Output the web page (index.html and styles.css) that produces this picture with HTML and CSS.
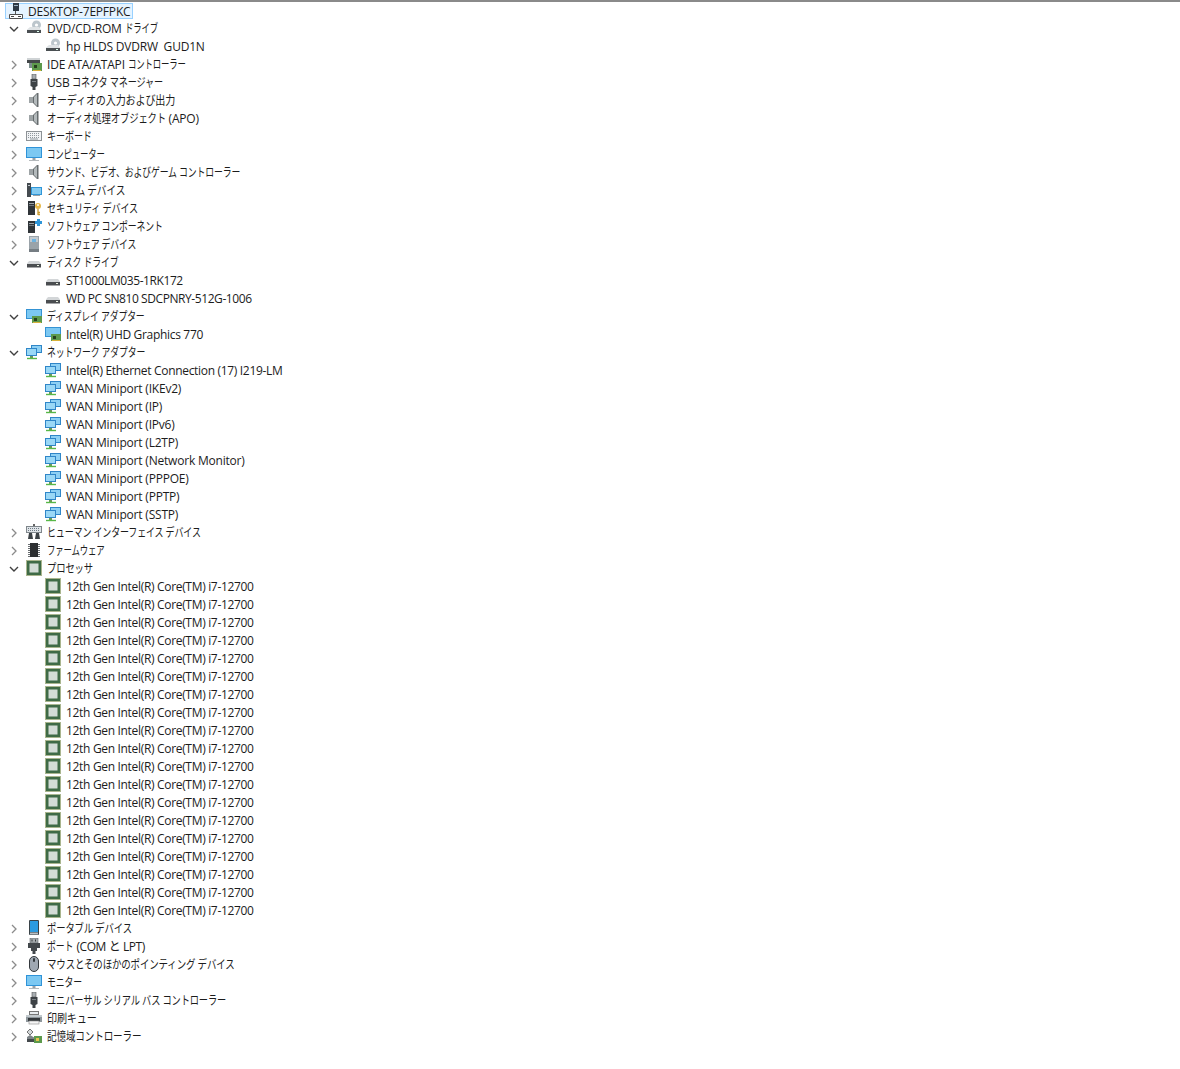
FILE: index.html
```html
<!DOCTYPE html>
<html lang="ja">
<head>
    <meta charset="UTF-8">
    <title>デバイス マネージャー</title>
    <link rel="stylesheet" href="styles.css">
</head>
<body>
<svg class="defs" width="0" height="0">
    <defs>
        <symbol id="open" viewBox="0 0 10 10"><path d="M1 3l4 4 4-4" fill="none" stroke="#404040" stroke-width="1.4"/></symbol>
        <symbol id="closed" viewBox="0 0 10 10"><path d="M3 1l4 4-4 4" fill="none" stroke="#8c8c8c" stroke-width="1.3"/></symbol>
        <symbol id="pc" viewBox="0 0 16 16"><rect x="5" y="0" width="6" height="8" fill="#2f3a45"/><rect x="6" y="2" width="4" height="1" fill="#9fb4c4"/><path d="M7.5 8v3" stroke="#555"/><path d="M1.5 11.5h13v4h-13z" fill="#fff" stroke="#505050"/><rect x="3" y="13" width="3" height="1" fill="#444"/><rect x="10" y="13" width="3" height="1" fill="#444"/></symbol>
        <symbol id="optical" viewBox="0 0 16 16"><circle cx="10.5" cy="5" r="4.5" fill="#bcc6cc"/><circle cx="10.5" cy="5" r="1.6" fill="#fff"/><path d="M1 9.5L4 7h9l2 2.5V13H1z" fill="#dfe3e5"/><rect x="1" y="10" width="14" height="3" fill="#4a4f52"/><rect x="11" y="11" width="2" height="1" fill="#dfe"/></symbol>
        <symbol id="disk" viewBox="0 0 16 16"><path d="M1 9.5L3 7h10l2 2.5V13H1z" fill="#d3d6d8"/><rect x="1" y="10" width="14" height="3.5" fill="#4a4d50"/><rect x="11" y="11" width="2" height="1" fill="#e8f0e0"/></symbol>
        <symbol id="ide" viewBox="0 0 16 16"><path d="M1 2h13v4H1z" fill="#cfd3d5"/><rect x="1" y="4" width="13" height="3" fill="#44484a"/><rect x="6" y="7" width="10" height="8" fill="#5d9a4c"/><rect x="8" y="9" width="3" height="3" fill="#27401f"/><path d="M7 14.5h8" stroke="#d8b13a"/><rect x="3" y="7" width="3" height="5" fill="#7b8d8c"/></symbol>
        <symbol id="usb" viewBox="0 0 16 16"><rect x="6" y="0" width="4" height="5" fill="#a9aeb2" stroke="#555" stroke-width=".6"/><path d="M4.5 5h7v7l-2 1v3h-3v-3l-2-1z" fill="#3d4246"/><rect x="6" y="7" width="4" height="1" fill="#7b8186"/></symbol>
        <symbol id="speaker" viewBox="0 0 16 16"><rect x="3" y="5" width="4" height="6" fill="#9ea4a6"/><path d="M7 5l4-4h1.5v14H11l-4-4z" fill="#666c6e"/><path d="M8 5l3-3v12l-3-3z" fill="#b4babc"/></symbol>
        <symbol id="keyboard" viewBox="0 0 16 16"><rect x=".5" y="3.5" width="15" height="9" fill="#f1f3f5" stroke="#8d9296"/><path d="M2 5.5h12M2 7.5h12M2 9.5h12" stroke="#8f979d" stroke-dasharray="1 1"/><path d="M4 11h8" stroke="#8f979d"/></symbol>
        <symbol id="monitor" viewBox="0 0 16 16"><rect x="0" y="1" width="16" height="11" fill="#2f93d8"/><rect x="1" y="2" width="14" height="9" fill="#7cc8f2"/><rect x="6.5" y="12" width="3" height="2" fill="#9aa0a4"/><rect x="3" y="14" width="10" height="1" fill="#b4b9bc"/></symbol>
        <symbol id="system" viewBox="0 0 16 16"><rect x="1" y="1" width="4" height="14" fill="#454b50"/><rect x="2" y="3" width="2" height="1" fill="#c2c8cc"/><rect x="5" y="5" width="11" height="8" fill="#2f96d8"/><rect x="6" y="6" width="9" height="6" fill="#86ccf2"/><rect x="7" y="13" width="7" height="1" fill="#9aa0a4"/></symbol>
        <symbol id="security" viewBox="0 0 16 16"><rect x="2" y="1" width="7" height="14" fill="#2f3438"/><rect x="3" y="3" width="5" height="1" fill="#9ca3a8"/><rect x="3" y="5" width="5" height="1" fill="#6e767c"/><circle cx="12" cy="6" r="3" fill="#e6b84a"/><circle cx="12" cy="5" r="1" fill="#fff"/><path d="M12 9v6M12 12.5h2M12 14.5h2" stroke="#c99a2e" stroke-width="1.3"/></symbol>
        <symbol id="softcomp" viewBox="0 0 16 16"><rect x="2" y="3" width="7" height="12" fill="#2f3438"/><rect x="3" y="5" width="5" height="1" fill="#9ca3a8"/><rect x="3" y="7" width="5" height="1" fill="#6e767c"/><path d="M9 3h2V1h3v2h2v3h-2v2h-3V6H9z" fill="#2f96d8"/></symbol>
        <symbol id="softdev" viewBox="0 0 16 16"><rect x="3" y="0" width="10" height="16" fill="#9aa3a9"/><rect x="4" y="1" width="8" height="5" fill="#c2cad0"/><rect x="6" y="3" width="4" height="3" fill="#6db3e0"/><rect x="3" y="13" width="10" height="3" fill="#757d83"/></symbol>
        <symbol id="display" viewBox="0 0 16 16"><rect x="0" y="1" width="16" height="10" fill="#3493d4"/><rect x="1" y="2" width="14" height="8" fill="#7cc8f2"/><rect x="6" y="8" width="10" height="7" fill="#5d9a4c"/><rect x="8" y="10" width="3" height="3" fill="#27401f"/><path d="M7 14.5h8" stroke="#d8b13a"/></symbol>
        <symbol id="network" viewBox="0 0 16 16"><rect x="5" y="1" width="11" height="8" fill="#2f86c8"/><rect x="6" y="2" width="9" height="6" fill="#8dd0f4"/><rect x="0" y="4" width="11" height="8" fill="#2f86c8"/><rect x="1" y="5" width="9" height="6" fill="#9ad8f6"/><rect x="4" y="12" width="3" height="2" fill="#6b9a5a"/><path d="M1 14.5h10" stroke="#58b848" stroke-width="1.4"/></symbol>
        <symbol id="hid" viewBox="0 0 16 16"><rect x=".5" y="2.5" width="15" height="6" fill="#dfe4e8" stroke="#7f868b"/><path d="M2 4.5h12M2 6.5h12" stroke="#6e7a84" stroke-dasharray="1 1"/><path d="M3 9h3l1 6H2zM10 9h3l1 6H9z" fill="#3c4246"/><rect x="7" y="0" width="2" height="2" fill="#666"/></symbol>
        <symbol id="firmware" viewBox="0 0 16 16"><rect x="4" y="1" width="8" height="14" fill="#2c2f31"/><path d="M2 2.5h2M2 4.5h2M2 6.5h2M2 8.5h2M2 10.5h2M2 12.5h2M2 14.5h2M12 2.5h2M12 4.5h2M12 6.5h2M12 8.5h2M12 10.5h2M12 12.5h2M12 14.5h2" stroke="#6a6f72"/></symbol>
        <symbol id="cpu" viewBox="0 0 16 16"><rect x="0" y="0" width="16" height="16" fill="#a9b58e"/><rect x="1" y="1" width="14" height="14" fill="#3f6b46"/><rect x="3.5" y="3.5" width="9" height="9" fill="#d3dcd6"/></symbol>
        <symbol id="portable" viewBox="0 0 16 16"><rect x="3" y="0" width="10" height="15" rx="1" fill="#3a4348"/><rect x="4" y="1" width="8" height="11" fill="#2c9be0"/><rect x="4" y="12.5" width="8" height="2" fill="#b9c0c4"/></symbol>
        <symbol id="port" viewBox="0 0 16 16"><rect x="4" y="0" width="8" height="5" fill="#a6abae" stroke="#5c6266" stroke-width=".6"/><rect x="5.5" y="1.5" width="1" height="2" fill="#33383b"/><rect x="9" y="1.5" width="1" height="2" fill="#33383b"/><rect x="2" y="5" width="12" height="5" fill="#43484c"/><path d="M5 10h6v3H9.5v3h-3v-3H5z" fill="#43484c"/></symbol>
        <symbol id="mouse" viewBox="0 0 16 16"><rect x="3.5" y="0.5" width="9" height="15" rx="4.5" fill="#9fa8b2" stroke="#33383c"/><rect x="7" y="2" width="2" height="4" rx="1" fill="#33383c"/></symbol>
        <symbol id="printer" viewBox="0 0 16 16"><rect x="3.5" y="1.5" width="9" height="3" fill="#e8ecef" stroke="#777"/><path d="M0 5h16v7H0z" fill="#8f979c"/><rect x="0" y="5" width="16" height="2" fill="#c2c9cd"/><rect x="2" y="8" width="12" height="3" fill="#34393c"/><rect x="3" y="11" width="10" height="3" fill="#f5f5f5" stroke="#888" stroke-width=".6"/></symbol>
        <symbol id="storage" viewBox="0 0 16 16"><path d="M1 4l3-3 3 3-3 3z" fill="#d4d8da" stroke="#555" stroke-width=".8"/><path d="M1 9l3-2 5 3v2H1z" fill="#7d8387"/><rect x="1" y="11" width="7" height="3" fill="#43484c"/><rect x="8" y="8" width="8" height="7" fill="#5d9a4c"/><rect x="10" y="10" width="3" height="3" fill="#e3c34c"/></symbol>
    </defs>
</svg>

<div class="top-line"></div>
<div class="tree">
    <div class="root"><svg class="icon"><use href="#pc"/></svg><span class="label">DESKTOP-7EPFPKC</span></div>

    <div class="row"><svg class="chev"><use href="#open"/></svg><svg class="icon"><use href="#optical"/></svg><span class="label">DVD/CD-ROM <span class="ja s70">ドライブ</span></span></div>
    <div class="row child"><svg class="icon"><use href="#optical"/></svg><span class="label">hp HLDS DVDRW&nbsp; GUD1N</span></div>
    <div class="row"><svg class="chev"><use href="#closed"/></svg><svg class="icon"><use href="#ide"/></svg><span class="label">IDE ATA/ATAPI <span class="ja s70">コントローラー</span></span></div>
    <div class="row"><svg class="chev"><use href="#closed"/></svg><svg class="icon"><use href="#usb"/></svg><span class="label">USB <span class="ja s76">コネクタ マネージャー</span></span></div>
    <div class="row"><svg class="chev"><use href="#closed"/></svg><svg class="icon"><use href="#speaker"/></svg><span class="label"><span class="ja s84">オーディオの入力および出力</span></span></div>
    <div class="row"><svg class="chev"><use href="#closed"/></svg><svg class="icon"><use href="#speaker"/></svg><span class="label"><span class="ja s78">オーディオ処理オブジェクト</span><span class="tail-apo">(APO)</span></span></div>
    <div class="row"><svg class="chev"><use href="#closed"/></svg><svg class="icon"><use href="#keyboard"/></svg><span class="label"><span class="ja s76">キーボード</span></span></div>
    <div class="row"><svg class="chev"><use href="#closed"/></svg><svg class="icon"><use href="#monitor"/></svg><span class="label"><span class="ja s70">コンピューター</span></span></div>
    <div class="row"><svg class="chev"><use href="#closed"/></svg><svg class="icon"><use href="#speaker"/></svg><span class="label"><span class="ja s74">サウンド、ビデオ、およびゲーム コントローラー</span></span></div>
    <div class="row"><svg class="chev"><use href="#closed"/></svg><svg class="icon"><use href="#system"/></svg><span class="label"><span class="ja s81">システム デバイス</span></span></div>
    <div class="row"><svg class="chev"><use href="#closed"/></svg><svg class="icon"><use href="#security"/></svg><span class="label"><span class="ja s76">セキュリティ デバイス</span></span></div>
    <div class="row"><svg class="chev"><use href="#closed"/></svg><svg class="icon"><use href="#softcomp"/></svg><span class="label"><span class="ja s74">ソフトウェア コンポーネント</span></span></div>
    <div class="row"><svg class="chev"><use href="#closed"/></svg><svg class="icon"><use href="#softdev"/></svg><span class="label"><span class="ja s74">ソフトウェア デバイス</span></span></div>
    <div class="row"><svg class="chev"><use href="#open"/></svg><svg class="icon"><use href="#disk"/></svg><span class="label"><span class="ja s74">ディスク ドライブ</span></span></div>
    <div class="row child"><svg class="icon"><use href="#disk"/></svg><span class="label tighter">ST1000LM035-1RK172</span></div>
    <div class="row child"><svg class="icon"><use href="#disk"/></svg><span class="label tighter">WD PC SN810 SDCPNRY-512G-1006</span></div>
    <div class="row"><svg class="chev"><use href="#open"/></svg><svg class="icon"><use href="#display"/></svg><span class="label"><span class="ja s74">ディスプレイ アダプター</span></span></div>
    <div class="row child"><svg class="icon"><use href="#display"/></svg><span class="label tight">Intel(R) UHD Graphics 770</span></div>
    <div class="row"><svg class="chev"><use href="#open"/></svg><svg class="icon"><use href="#network"/></svg><span class="label"><span class="ja s74">ネットワーク アダプター</span></span></div>
    <div class="row child"><svg class="icon"><use href="#network"/></svg><span class="label tight">Intel(R) Ethernet Connection (17) I219-LM</span></div>
    <div class="row child"><svg class="icon"><use href="#network"/></svg><span class="label">WAN Miniport (IKEv2)</span></div>
    <div class="row child"><svg class="icon"><use href="#network"/></svg><span class="label">WAN Miniport (IP)</span></div>
    <div class="row child"><svg class="icon"><use href="#network"/></svg><span class="label">WAN Miniport (IPv6)</span></div>
    <div class="row child"><svg class="icon"><use href="#network"/></svg><span class="label">WAN Miniport (L2TP)</span></div>
    <div class="row child"><svg class="icon"><use href="#network"/></svg><span class="label">WAN Miniport (Network Monitor)</span></div>
    <div class="row child"><svg class="icon"><use href="#network"/></svg><span class="label">WAN Miniport (PPPOE)</span></div>
    <div class="row child"><svg class="icon"><use href="#network"/></svg><span class="label">WAN Miniport (PPTP)</span></div>
    <div class="row child"><svg class="icon"><use href="#network"/></svg><span class="label">WAN Miniport (SSTP)</span></div>
    <div class="row"><svg class="chev"><use href="#closed"/></svg><svg class="icon"><use href="#hid"/></svg><span class="label"><span class="ja s75">ヒューマン インターフェイス デバイス</span></span></div>
    <div class="row"><svg class="chev"><use href="#closed"/></svg><svg class="icon"><use href="#firmware"/></svg><span class="label"><span class="ja s70">ファームウェア</span></span></div>
    <div class="row"><svg class="chev"><use href="#open"/></svg><svg class="icon"><use href="#cpu"/></svg><span class="label"><span class="ja s78">プロセッサ</span></span></div>
    <div class="row child"><svg class="icon"><use href="#cpu"/></svg><span class="label tight">12th Gen Intel(R) Core(TM) i7-12700</span></div>
    <div class="row child"><svg class="icon"><use href="#cpu"/></svg><span class="label tight">12th Gen Intel(R) Core(TM) i7-12700</span></div>
    <div class="row child"><svg class="icon"><use href="#cpu"/></svg><span class="label tight">12th Gen Intel(R) Core(TM) i7-12700</span></div>
    <div class="row child"><svg class="icon"><use href="#cpu"/></svg><span class="label tight">12th Gen Intel(R) Core(TM) i7-12700</span></div>
    <div class="row child"><svg class="icon"><use href="#cpu"/></svg><span class="label tight">12th Gen Intel(R) Core(TM) i7-12700</span></div>
    <div class="row child"><svg class="icon"><use href="#cpu"/></svg><span class="label tight">12th Gen Intel(R) Core(TM) i7-12700</span></div>
    <div class="row child"><svg class="icon"><use href="#cpu"/></svg><span class="label tight">12th Gen Intel(R) Core(TM) i7-12700</span></div>
    <div class="row child"><svg class="icon"><use href="#cpu"/></svg><span class="label tight">12th Gen Intel(R) Core(TM) i7-12700</span></div>
    <div class="row child"><svg class="icon"><use href="#cpu"/></svg><span class="label tight">12th Gen Intel(R) Core(TM) i7-12700</span></div>
    <div class="row child"><svg class="icon"><use href="#cpu"/></svg><span class="label tight">12th Gen Intel(R) Core(TM) i7-12700</span></div>
    <div class="row child"><svg class="icon"><use href="#cpu"/></svg><span class="label tight">12th Gen Intel(R) Core(TM) i7-12700</span></div>
    <div class="row child"><svg class="icon"><use href="#cpu"/></svg><span class="label tight">12th Gen Intel(R) Core(TM) i7-12700</span></div>
    <div class="row child"><svg class="icon"><use href="#cpu"/></svg><span class="label tight">12th Gen Intel(R) Core(TM) i7-12700</span></div>
    <div class="row child"><svg class="icon"><use href="#cpu"/></svg><span class="label tight">12th Gen Intel(R) Core(TM) i7-12700</span></div>
    <div class="row child"><svg class="icon"><use href="#cpu"/></svg><span class="label tight">12th Gen Intel(R) Core(TM) i7-12700</span></div>
    <div class="row child"><svg class="icon"><use href="#cpu"/></svg><span class="label tight">12th Gen Intel(R) Core(TM) i7-12700</span></div>
    <div class="row child"><svg class="icon"><use href="#cpu"/></svg><span class="label tight">12th Gen Intel(R) Core(TM) i7-12700</span></div>
    <div class="row child"><svg class="icon"><use href="#cpu"/></svg><span class="label tight">12th Gen Intel(R) Core(TM) i7-12700</span></div>
    <div class="row child"><svg class="icon"><use href="#cpu"/></svg><span class="label tight">12th Gen Intel(R) Core(TM) i7-12700</span></div>
    <div class="row"><svg class="chev"><use href="#closed"/></svg><svg class="icon"><use href="#portable"/></svg><span class="label"><span class="ja s78">ポータブル デバイス</span></span></div>
    <div class="row"><svg class="chev"><use href="#closed"/></svg><svg class="icon"><use href="#port"/></svg><span class="label"><span class="ja s74">ポート</span><span class="tail-lpt">(COM と LPT)</span></span></div>
    <div class="row"><svg class="chev"><use href="#closed"/></svg><svg class="icon"><use href="#mouse"/></svg><span class="label"><span class="ja s79">マウスとそのほかのポインティング デバイス</span></span></div>
    <div class="row"><svg class="chev"><use href="#closed"/></svg><svg class="icon"><use href="#monitor"/></svg><span class="label"><span class="ja s74">モニター</span></span></div>
    <div class="row"><svg class="chev"><use href="#closed"/></svg><svg class="icon"><use href="#usb"/></svg><span class="label"><span class="ja s77">ユニバーサル シリアル バス コントローラー</span></span></div>
    <div class="row"><svg class="chev"><use href="#closed"/></svg><svg class="icon"><use href="#printer"/></svg><span class="label"><span class="ja s84">印刷キュー</span></span></div>
    <div class="row"><svg class="chev"><use href="#closed"/></svg><svg class="icon"><use href="#storage"/></svg><span class="label"><span class="ja s80">記憶域コントローラー</span></span></div>
</div>
</body>
</html>
```

FILE: styles.css
```css
html, body {
    margin: 0;
    padding: 0;
    background-color: #ffffff;
}
body {
    font-family: "Open Sans", "Noto Sans CJK JP", sans-serif;
    font-size: 12px;
    color: #1c1c1c;
    height: 1069px;
    overflow: hidden;
}
.defs {
    display: block;
    height: 0;
}
.top-line {
    height: 2px;
    background-color: #8a8a8a;
}
.tree {
    padding-top: 1px;
}
.root {
    display: flex;
    align-items: center;
    width: fit-content;
    height: 14px;
    margin-left: 5px;
    padding: 0 2px;
    background-color: #e5f3ff;
    border: 1px solid #99d1ff;
}
.root .icon {
    margin-right: 4px;
}
.row {
    display: flex;
    align-items: center;
    height: 18px;
    padding-left: 9px;
}
.row.child {
    padding-left: 45px;
}
.chev {
    width: 10px;
    height: 10px;
    margin-top: 2px;
    margin-right: 7px;
    flex: none;
}
.icon {
    width: 16px;
    height: 16px;
    margin-right: 5px;
    flex: none;
}
.label {
    white-space: nowrap;
    letter-spacing: -0.2px;
}
.label.tight {
    letter-spacing: -0.32px;
}
.label.tighter {
    letter-spacing: -0.42px;
}
/* Noto kana is much wider than the UI font of the original, so squeeze it */
.ja {
    display: inline-block;
    transform-origin: left center;
}
.s70 { transform: scaleX(0.7); }
.s74 { transform: scaleX(0.74); }
.s75 { transform: scaleX(0.75); }
.s76 { transform: scaleX(0.76); }
.s77 { transform: scaleX(0.77); }
.s78 { transform: scaleX(0.78); }
.s79 { transform: scaleX(0.79); }
.s80 { transform: scaleX(0.8); }
.s81 { transform: scaleX(0.81); }
.s84 { transform: scaleX(0.84); }
.tail-apo {
    margin-left: -31px;
}
.tail-lpt {
    margin-left: -6px;
    letter-spacing: -0.42px;
}
```
